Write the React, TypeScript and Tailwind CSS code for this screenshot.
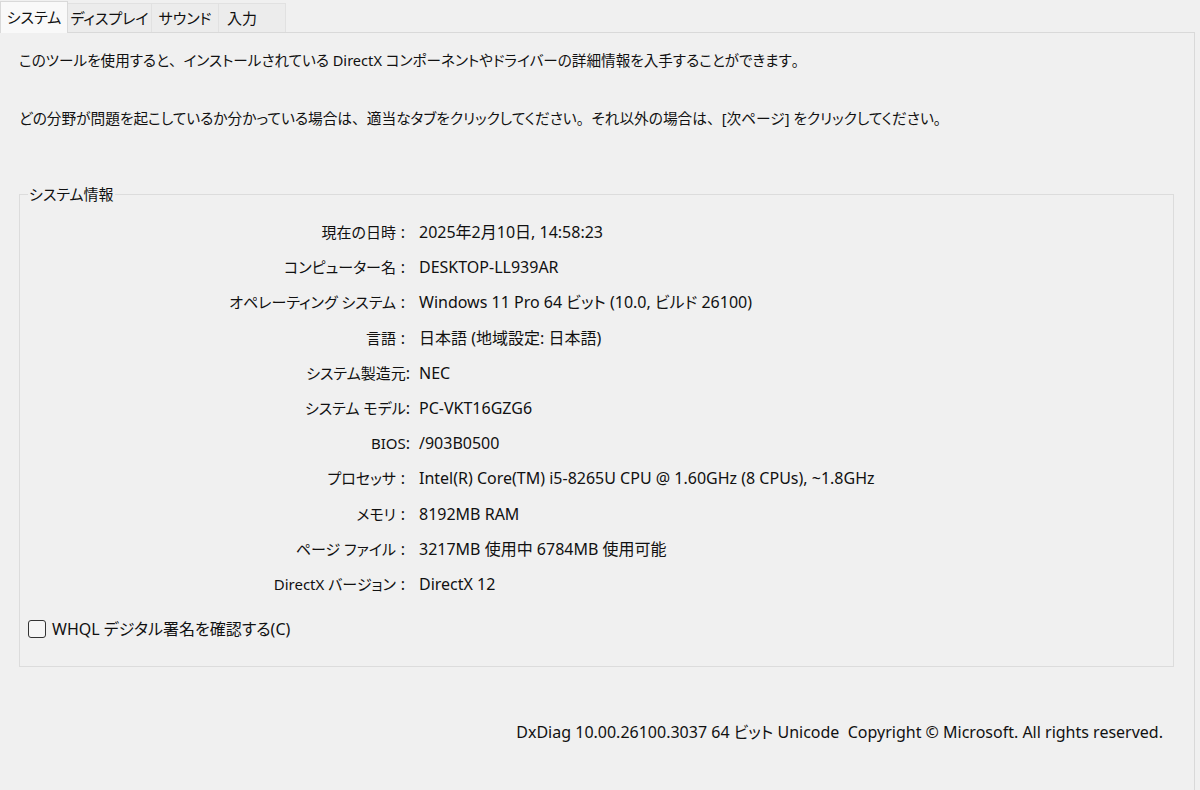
import React from "react";

const rows: [string, string, string][] = [
  ["現在の日時", "：", "2025年2月10日, 14:58:23"],
  ["コンピューター名", "：", "DESKTOP-LL939AR"],
  ["オペレーティング システム", "：", "Windows 11 Pro 64 ビット (10.0, ビルド 26100)"],
  ["言語", "：", "日本語 (地域設定: 日本語)"],
  ["システム製造元", ":", "NEC"],
  ["システム モデル", ":", "PC-VKT16GZG6"],
  ["BIOS", ":", "/903B0500"],
  ["プロセッサ", "：", "Intel(R) Core(TM) i5-8265U CPU @ 1.60GHz (8 CPUs), ~1.8GHz"],
  ["メモリ", "：", "8192MB RAM"],
  ["ページ ファイル", "：", "3217MB 使用中 6784MB 使用可能"],
  ["DirectX バージョン", "：", "DirectX 12"],
];

const N = "[font-feature-settings:normal]";

export default function App() {
  return (
    <div
      className="w-[1200px] h-[790px] bg-[#f0f0f0] text-[#111] text-[16px] overflow-hidden flex flex-col [font-feature-settings:'palt']"
      style={{ fontFamily: '"Noto Sans", "Noto Sans CJK JP", sans-serif' }}
    >
      <div className="flex h-[32px] items-end pl-0 text-[15px] whitespace-nowrap">
        <div className="h-[32px] w-[68px] bg-[#f9f9f9] border-x border-t border-[#d9d9d9] flex items-center justify-center relative top-[1px] z-10">
          システム
        </div>
        <div className="h-[29px] w-[84px] bg-[#ececec] border-t border-r border-[#e1e1e1] flex items-center justify-center">
          ディスプレイ
        </div>
        <div className="h-[29px] w-[67px] bg-[#ececec] border-t border-r border-[#e1e1e1] flex items-center justify-center">
          サウンド
        </div>
        <div className="h-[29px] w-[67px] bg-[#ececec] border-t border-r border-[#e1e1e1] flex items-center justify-start pl-[8px]">
          入力
        </div>
      </div>
      <div className="w-[1195px] flex-1 border-t border-r border-[#d9d9d9] bg-[#f0f0f0] flex flex-col">
        <div className="pl-[19px] pt-[17px] leading-[20px] whitespace-nowrap text-[14.6px]">
          このツールを使用すると<span className={N}>、</span>インストールされている DirectX コンポーネントやドライバーの詳細情報を入手することができます<span className={N}>。</span>
        </div>
        <div className="pl-[19px] pt-[38px] leading-[20px] whitespace-nowrap text-[14.7px]">
          どの分野が問題を起こしているか分かっている場合は<span className={N}>、</span>適当なタブをクリックしてください<span className={N}>。</span>それ以外の場合は<span className={N}>、</span>[次ページ] をクリックしてください<span className={N}>。</span>
        </div>
        <div className="ml-[19px] mt-[66px] w-[1155px] h-[473px] border border-[#dcdcdc] relative">
          <div className="absolute left-[8px] top-[-11px] bg-[#f0f0f0] px-[1px] leading-[20px] text-[15px]">
            システム情報
          </div>
          <div className="grid grid-cols-[390px_1fr] gap-x-[9px] pt-[20px]">
            {rows.map(([k, c, v]) => (
              <React.Fragment key={k}>
                <div className="text-right h-[35.2px] leading-[35.2px] whitespace-nowrap">
                  <span className="text-[15px]">{k}</span>
                  {c === "：" ? (
                    <span className="inline-block w-[14px] text-center">:</span>
                  ) : (
                    <span>{c}</span>
                  )}
                </div>
                <div className="h-[35.2px] leading-[35.2px] whitespace-nowrap">{v}</div>
              </React.Fragment>
            ))}
          </div>
          <div className="flex items-center gap-[6px] ml-[8px] mt-[15px]">
            <div className="w-[18px] h-[18px] border border-[#333] rounded-[3px] bg-[#f5f5f5]" />
            <span>WHQL デジタル署名を確認する(C)</span>
          </div>
        </div>
        <div className="flex justify-end pr-[31px] mt-[55px] leading-[20px] whitespace-pre">
          DxDiag 10.00.26100.3037 64 ビット Unicode  Copyright © Microsoft. All rights reserved.
        </div>
      </div>
    </div>
  );
}
